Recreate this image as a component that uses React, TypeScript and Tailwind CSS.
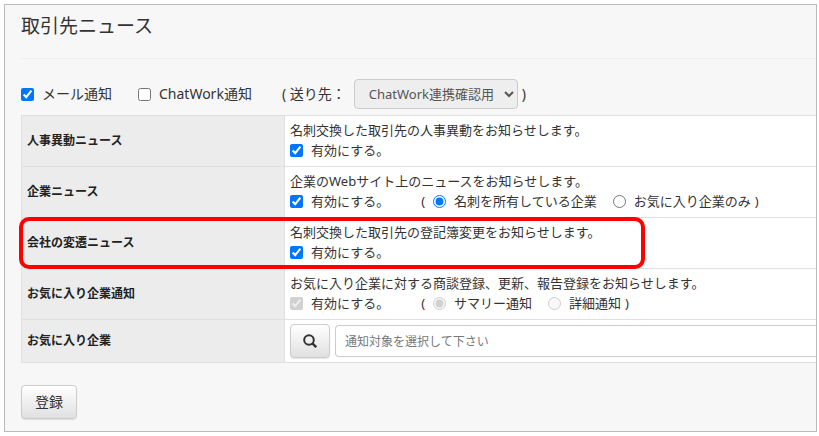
import type { ReactNode } from "react";
import clsx from "clsx";

const buttonClass =
  "flex h-[34px] cursor-pointer items-center justify-center rounded border border-[#ccc] bg-linear-to-b from-white to-[#e0e0e0] text-[#333] shadow-[0_1px_1px_rgba(0,0,0,0.1)]";

type Choice = { id: string; label: string };

type RowProps = {
  id: string;
  title: string;
  description: string;
  disabled?: boolean;
  highlighted?: boolean;
  choices?: Choice[];
};

const rows: RowProps[] = [
  {
    id: "personnel",
    title: "人事異動ニュース",
    description: "名刺交換した取引先の人事異動をお知らせします。",
  },
  {
    id: "company",
    title: "企業ニュース",
    description: "企業のWebサイト上のニュースをお知らせします。",
    choices: [
      { id: "owned", label: "名刺を所有している企業" },
      { id: "favorite", label: "お気に入り企業のみ" },
    ],
  },
  {
    id: "history",
    title: "会社の変遷ニュース",
    description: "名刺交換した取引先の登記簿変更をお知らせします。",
    highlighted: true,
  },
  {
    id: "favorite-notice",
    title: "お気に入り企業通知",
    description: "お気に入り企業に対する商談登録、更新、報告登録をお知らせします。",
    disabled: true,
    choices: [
      { id: "summary", label: "サマリー通知" },
      { id: "detail", label: "詳細通知" },
    ],
  },
];

function HeadCell({ children }: { children: ReactNode }) {
  return (
    <th scope="row" className="relative w-[263px] border border-[#e0e0e0] bg-[#ececec] px-[5px] text-left text-xs font-bold text-[#222]">
      {children}
    </th>
  );
}

function NewsRow({ id, title, description, disabled, highlighted, choices }: RowProps) {
  return (
    <tr>
      <HeadCell>
        {title}
        {highlighted && (
          <span className="pointer-events-none absolute -top-px -left-[3px] z-10 h-[52px] w-[626px] rounded-[10px] border-4 border-[#f00]" />
        )}
      </HeadCell>
      <td className="border-y border-[#e0e0e0] bg-white pt-1 pr-2 pb-[6px] pl-[5px] leading-5">
        <p>{description}</p>
        <div className="flex items-center whitespace-nowrap">
          <label className="flex items-center gap-2">
            <input type="checkbox" defaultChecked disabled={disabled} className="size-[13px]" />
            有効にする。
          </label>
          {choices && (
            <div className="ml-8 flex items-center">
              <span className="mr-2">(</span>
              {choices.map((choice, i) => (
                <label key={choice.id} className={clsx("flex items-center gap-2", i > 0 && "ml-4")}>
                  <input type="radio" name={id} defaultChecked={i === 0} disabled={disabled} className="size-[13px]" />
                  {choice.label}
                </label>
              ))}
              <span className="ml-1">)</span>
            </div>
          )}
        </div>
      </td>
    </tr>
  );
}

function SearchIcon() {
  return (
    <svg viewBox="0 0 14 14" className="size-[14px]" fill="none" stroke="currentColor" aria-hidden="true">
      <circle cx="6" cy="6" r="4.8" strokeWidth="2" />
      <path d="M9.4 9.4 13.2 13.2" strokeWidth="2.4" />
    </svg>
  );
}

export default function App() {
  return (
    <div className="bg-white pt-1 pr-[2px] pb-[3px] pl-1 font-['Noto_Sans','Noto_Sans_CJK_JP',sans-serif] text-[13px] text-[#333]">
      <main className="overflow-hidden border border-[#bbb] bg-[#f7f7f7] pb-3 pl-4">
        <h1 className="border-b border-[#eee] pt-[7px] pb-[18px] text-[19px] leading-7">取引先ニュース</h1>

        <form onSubmit={(e) => e.preventDefault()}>
          <div className="flex items-center pt-5 pb-[6px] text-sm whitespace-nowrap">
            <label className="flex items-center gap-2">
              <input type="checkbox" defaultChecked className="size-[13px]" />
              メール通知
            </label>
            <label className="ml-[26px] flex items-center gap-2">
              <input type="checkbox" className="size-[13px]" />
              ChatWork通知
            </label>
            <label htmlFor="destination" className="ml-[30px]">
              ( 送り先：
            </label>
            <select
              id="destination"
              disabled
              className="ml-2 h-[30px] w-[164px] rounded border border-[#ccc] bg-[#eee] pr-1 pl-[10px] text-[13px] text-[#555] disabled:opacity-100"
            >
              <option>ChatWork連携確認用</option>
            </select>
            <span className="ml-1">)</span>
          </div>

          <table className="w-full border-collapse">
            <tbody>
              {rows.map((row) => (
                <NewsRow key={row.id} {...row} />
              ))}
              <tr>
                <HeadCell>
                  <label htmlFor="favorites">お気に入り企業</label>
                </HeadCell>
                <td className="border-y border-[#e0e0e0] bg-white py-1 pl-[5px]">
                  <div className="flex items-center gap-[5px]">
                    <button type="button" aria-label="検索" className={clsx(buttonClass, "w-10")}>
                      <SearchIcon />
                    </button>
                    <input
                      id="favorites"
                      type="text"
                      placeholder="通知対象を選択して下さい"
                      className="h-8 min-w-0 flex-1 rounded-l border border-r-0 border-[#ccc] bg-white px-[9px] text-xs placeholder:text-[#777]"
                    />
                  </div>
                </td>
              </tr>
            </tbody>
          </table>

          <button type="submit" className={clsx(buttonClass, "mt-[22px] px-[13px] text-sm")}>
            登録
          </button>
        </form>
      </main>
    </div>
  );
}
